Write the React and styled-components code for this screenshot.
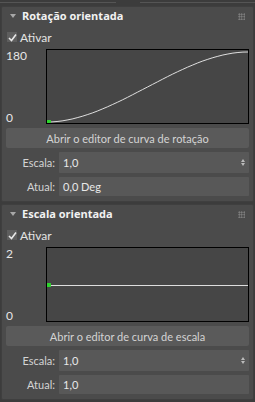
import React from 'react';
import styled, { createGlobalStyle } from 'styled-components';

const GlobalStyle = createGlobalStyle`
  html, body {
    margin: 0;
    padding: 0;
    background: #3c3c3c;
  }
  body {
    font-family: Lato, "Open Sans", sans-serif;
    font-size: 11px;
    color: #dcdcdc;
  }
`;

const Page = styled.div`
  width: 255px;
  height: 402px;
  display: flex;
  flex-direction: column;
  background: #3c3c3c;
  overflow: hidden;
`;

const TopBar = styled.div`
  height: 6px;
  display: flex;
  align-items: center;
  gap: 6px;
  padding: 0 0 2px 0;
  box-sizing: border-box;
`;

const TopLine = styled.div`
  flex: 1;
  height: 1px;
  background: #555;
`;

const TopGrip = styled.div`
  width: 12px;
  height: 3px;
  background-image: radial-gradient(#b8b8b8 0.6px, transparent 0.7px);
  background-size: 2px 2px;
`;

const Panel = styled.div`
  margin: 0 1px ${p => p.$gap}px 1px;
  background: #4b4b4b;
  border: 1px solid #3f3f3f;
  border-radius: 2px;
  padding: 0 4px 5px 4px;
  display: flex;
  flex-direction: column;
`;

const Header = styled.div`
  height: 17px;
  display: flex;
  align-items: center;
  padding-left: 4px;
  position: relative;
`;

const Triangle = styled.span`
  width: 0;
  height: 0;
  border-left: 3px solid transparent;
  border-right: 3px solid transparent;
  border-top: 4px solid #a8a8a8;
  margin-right: 6px;
`;

const Title = styled.span`
  font-family: "Open Sans", sans-serif;
  font-weight: bold;
  color: #f2f2f2;
  font-size: 11px;
`;

const Grip = styled.span`
  position: absolute;
  right: 4px;
  top: 6px;
  width: 7px;
  height: 7px;
  background-image: radial-gradient(#8a8a8a 0.8px, transparent 0.9px);
  background-size: 2.5px 2.5px;
`;

const CheckRow = styled.label`
  display: flex;
  align-items: center;
  height: 16px;
  margin-top: 5px;
  gap: 3px;
  padding-left: 1px;
  color: #e4e4e4;
  font-size: 12px;
`;

const Box = styled.span`
  width: 10px;
  height: 10px;
  background: #5e5e5e;
  display: flex;
  align-items: center;
  justify-content: center;
`;

const GraphRow = styled.div`
  display: flex;
  margin-top: 4px;
  height: 75px;
`;

const Axis = styled.div`
  width: 40px;
  display: flex;
  flex-direction: column;
  justify-content: space-between;
  padding: 1px 0 0 0;
  line-height: 12px;
  font-size: 12px;
  color: #e6e6e6;
`;

const Graph = styled.div`
  flex: 1;
  border: 1px solid #000;
  background: #464646;
  position: relative;
`;

const Button = styled.div`
  margin-top: 4px;
  height: 20px;
  background: #5a5a5a;
  border-radius: 2px;
  display: flex;
  align-items: center;
  justify-content: center;
  color: #d4d4d4;
`;

const FieldRow = styled.div`
  display: flex;
  align-items: center;
  margin-top: ${p => p.$top}px;
`;

const FieldLabel = styled.span`
  width: 49px;
  text-align: right;
  padding-right: 4px;
  color: #d4d4d4;
`;

const Field = styled.div`
  flex: 1;
  height: ${p => p.$h}px;
  background: #585858;
  border-radius: 1px;
  display: flex;
  align-items: center;
  justify-content: space-between;
  padding: 0 4px 0 4px;
  color: #e8e8e8;
`;

const Spin = styled.span`
  display: flex;
  flex-direction: column;
  gap: 1px;
`;

const Arrow = styled.span`
  width: 0;
  height: 0;
  border-left: 2.5px solid transparent;
  border-right: 2.5px solid transparent;
  ${p => (p.$up ? 'border-bottom: 3px solid #bbb;' : 'border-top: 3px solid #bbb;')}
`;

const Check = () => (
  <svg width="9" height="9" viewBox="0 0 9 9">
    <path d="M1 5 L3.5 7.5 L8 1.5" stroke="#e8e8e8" strokeWidth="1.6" fill="none" />
  </svg>
);

const sCurve = (() => {
  const pts = [];
  const w = 204;
  const h = 73;
  for (let i = 0; i <= 40; i++) {
    const t = i / 40;
    const v = 3 * t * t - 2 * t * t * t;
    pts.push(`${(t * w).toFixed(1)},${(h - 1 - v * (h - 3)).toFixed(1)}`);
  }
  return pts.join(' ');
})();

const CurveRotation = () => (
  <svg width="100%" height="100%" viewBox="0 0 204 73" preserveAspectRatio="none">
    <polyline points={sCurve} fill="none" stroke="#e0e0e0" strokeWidth="1" />
    <rect x="0" y="70" width="4" height="4" fill="#2ed52e" />
  </svg>
);

const CurveFlat = () => (
  <svg width="100%" height="100%" viewBox="0 0 204 73" preserveAspectRatio="none">
    <line x1="0" y1="37.5" x2="204" y2="37.5" stroke="#e0e0e0" strokeWidth="1" />
    <rect x="0" y="35" width="4" height="4" fill="#2ed52e" />
  </svg>
);

const Section = ({ title, top, curve, button, actual, gap }) => (
  <Panel $gap={gap}>
    <Header>
      <Triangle />
      <Title>{title}</Title>
      <Grip />
    </Header>
    <CheckRow>
      <Box><Check /></Box>
      <span>Ativar</span>
    </CheckRow>
    <GraphRow>
      <Axis>
        <span>{top}</span>
        <span>0</span>
      </Axis>
      <Graph>{curve}</Graph>
    </GraphRow>
    <Button>{button}</Button>
    <FieldRow $top={4}>
      <FieldLabel>Escala:</FieldLabel>
      <Field $h={21}>
        <span>1,0</span>
        <Spin><Arrow $up /><Arrow /></Spin>
      </Field>
    </FieldRow>
    <FieldRow $top={4}>
      <FieldLabel>Atual:</FieldLabel>
      <Field $h={19}>
        <span>{actual}</span>
      </Field>
    </FieldRow>
  </Panel>
);

export default function App() {
  return (
    <Page>
      <GlobalStyle />
      <TopBar>
        <TopLine />
        <TopGrip />
        <TopLine />
      </TopBar>
      <Section
        title="Rotação orientada"
        top="180"
        curve={<CurveRotation />}
        button="Abrir o editor de curva de rotação"
        actual="0,0 Deg"
        gap={2}
      />
      <Section
        title="Escala orientada"
        top="2"
        curve={<CurveFlat />}
        button="Abrir o editor de curva de escala"
        actual="1,0"
        gap={0}
      />
    </Page>
  );
}
